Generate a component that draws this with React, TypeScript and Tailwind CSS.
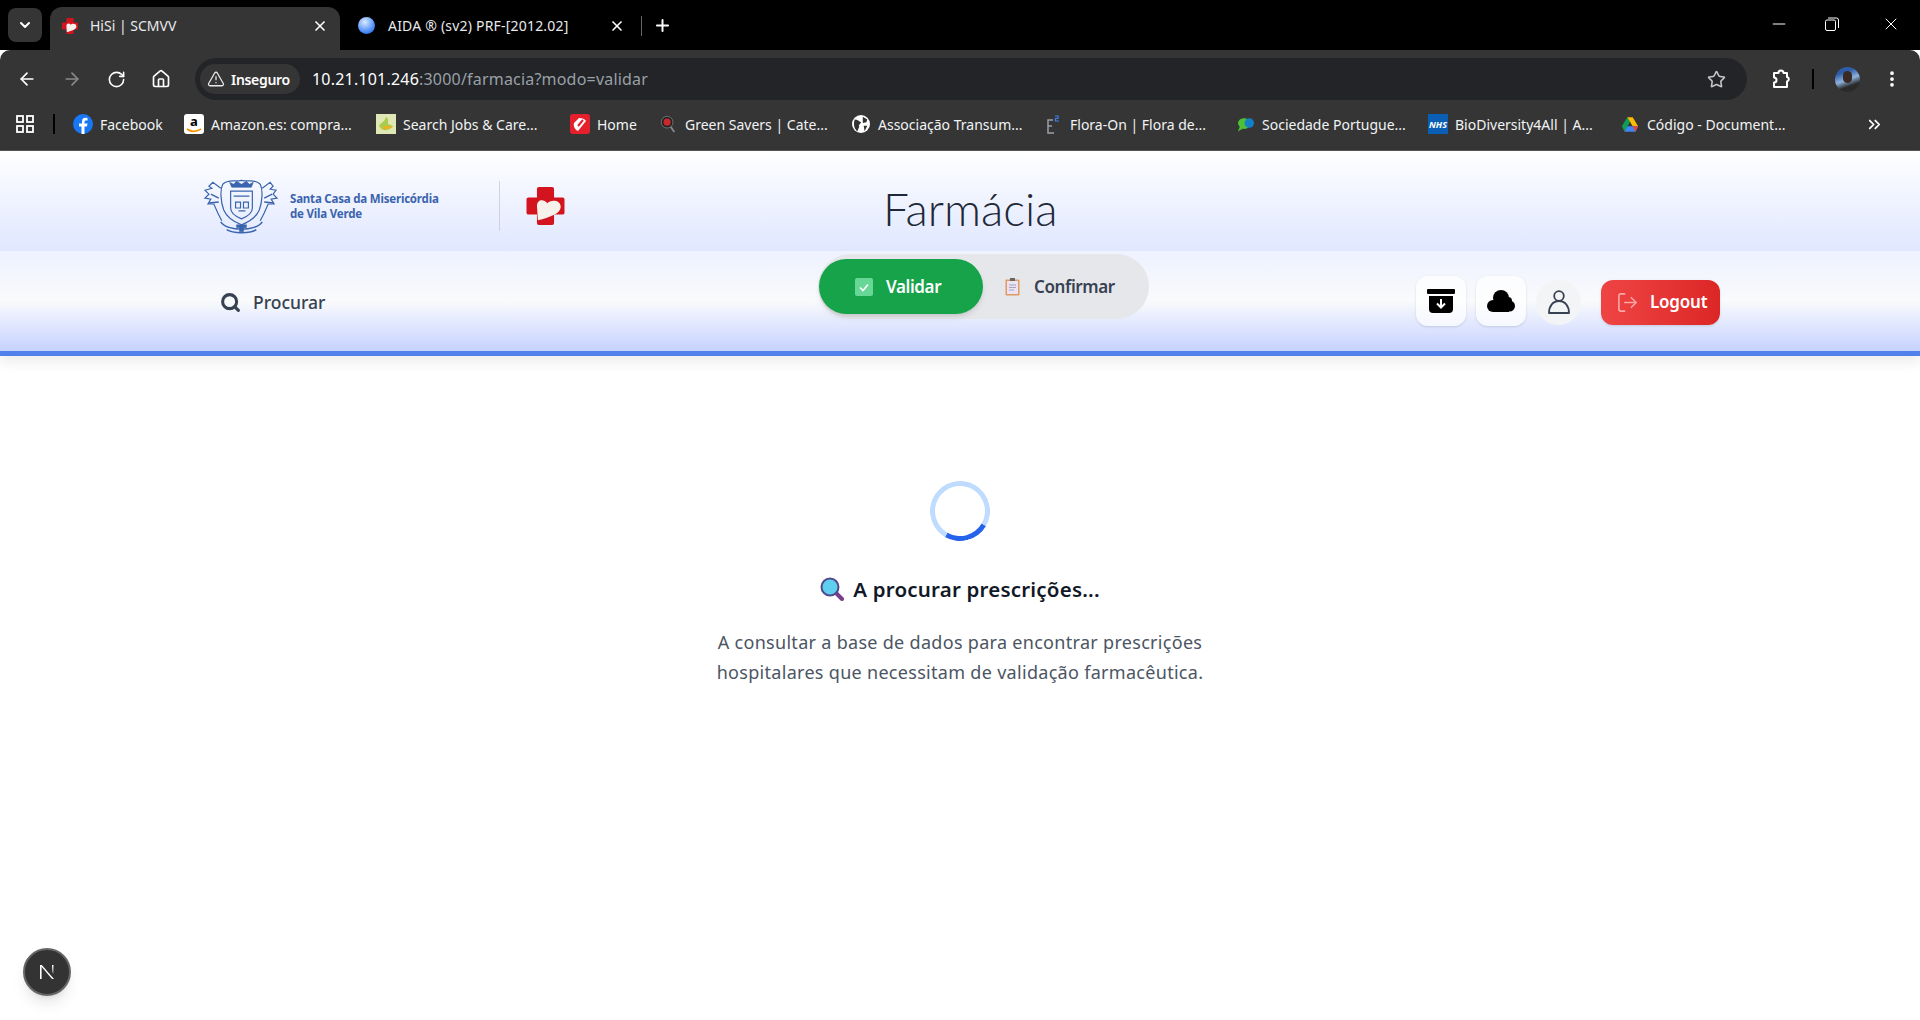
import React from 'react';
import { ArrowLeft, ArrowRight, RotateCw, Home, Star, MoreVertical, X, Plus, ChevronDown, ChevronsRight, TriangleAlert, Search, LogOut, Minus } from 'lucide-react';

function CrossFavicon({ className }: { className: string }) {
  return (
    <svg viewBox="0 0 40 40" className={className}>
      <path d="M11 2a2 2 0 0 1 2-2h14a2 2 0 0 1 2 2v9h9a2 2 0 0 1 2 2v14a2 2 0 0 1-2 2h-9v9a2 2 0 0 1-2 2H13a2 2 0 0 1-2-2v-9H2a2 2 0 0 1-2-2V13a2 2 0 0 1 2-2h9z" fill="#d3141f" />
      <path d="M12 35L11 20C11 13 18 12 22 17C25 13 36 13 36 21C36 28 24 32 12 35z" fill="#f6f1ea" />
    </svg>
  );
}

function Crest() {
  return (
    <svg viewBox="0 0 78 60" className="w-[77px] h-[60px] shrink-0" fill="none" stroke="#3a64ad">
      <path d="M20 8c6-6 12-2 19-4 7 2 13-2 19 4 3 6 2 18-1 26-3 7-10 12-18 15-8-3-15-8-18-15-3-8-4-20-1-26z" strokeWidth="1.2" />
      <path d="M28 15h22v17c0 6-6 9-11 11-5-2-11-5-11-11z" strokeWidth="1.2" />
      <path d="M29 11h20l2-5-4 2-3-3-5 3-5-3-3 3-4-2z" fill="#3a64ad" strokeWidth="0.6" />
      <path d="M31 20h16M33 26h5v6h-5zM41 26h5v6h-5zM36 35h7" strokeWidth="1.2" />
      <path d="M18 12l-8-6-4 4 3 2-7 2 4 4-4 4 6 1-3 5 6 0 4 9 4 8M60 12l8-6 3 4-3 3 6 1-3 4 4 4-6 1 3 5-6 0-4 9-4 8" strokeWidth="1.2" />
      <path d="M8 18l8 4M6 27l10-1M70 18l-8 4M72 27l-10-1M18 46c6 10 36 10 42 0M24 54c6 4 24 4 30 0" strokeWidth="1.5" />
      <path d="M34 49h10v3h-3v4h-4v-4h-3z" fill="#3a64ad" strokeWidth="0.5" />
    </svg>
  );
}

const bookmarks = [
  { label: 'Facebook', box: 'w-[111px]', icon: <svg viewBox="0 0 20 20" className="w-5 h-5"><circle cx="10" cy="10" r="10" fill="#1877f2" /><path d="M11.500 20v-7.500h2.500l.5-3h-3V8c0-1 .5-1.500 1.500-1.500h1.500V4c-3-.5-5.500 0-5.500 3.500v2H6v3h2.500V20z" fill="#fff" /></svg> },
  { label: 'Amazon.es: compra...', box: 'w-[192px]', icon: <span className="w-5 h-5 rounded-[3px] bg-white flex flex-col items-center justify-start text-black font-bold text-[13px] leading-[14px]">a<svg viewBox="0 0 16 5" className="w-4 h-[5px]" fill="none" stroke="#f79400" strokeWidth="1.6"><path d="M1 1c4 3 9 3 14 0" /></svg></span> },
  { label: 'Search Jobs & Care...', box: 'w-[194px]', icon: <svg viewBox="0 0 20 20" className="w-5 h-5"><rect width="20" height="20" fill="#dfe8b4" /><path d="M3 12c2-4 5-3 7-9 3 1 2 6 2 7l5 2c-3 5-11 6-14 0z" fill="#a9cc4f" /><path d="M8 12h9l-4 3H6z" fill="#e9b422" /></svg> },
  { label: 'Home', box: 'w-[88px]', icon: <svg viewBox="0 0 20 20" className="w-5 h-5"><rect width="20" height="20" rx="3" fill="#e3202c" /><path d="M4 9l5-5c3 0 6 1 7 3L8 17c-3-1-5-5-4-8z" fill="#fff" /><path d="M8 12l5-6" stroke="#e3202c" strokeWidth="2" /></svg> },
  { label: 'Green Savers | Cate...', box: 'w-[193px]', icon: <svg viewBox="0 0 20 20" className="w-[18px] h-5"><circle cx="9" cy="8" r="6.500" fill="#222" stroke="#777" /><circle cx="9" cy="8" r="4" fill="#c9282c" /><path d="M13 13l4 6" stroke="#888" strokeWidth="2" /></svg> },
  { label: 'Associação Transum...', box: 'w-[192px]', icon: <svg viewBox="0 0 20 20" className="w-[18px] h-[18px]"><circle cx="10" cy="10" r="10" fill="#fff" /><path d="M3 5c3 0 5 2 7 3-1 3-3 2-2 5l-2 5c-3-2-5-7-3-13zM12 2l5 3-1 3-4 1zM13 12l4 0-3 6z" fill="#333" /></svg> },
  { label: 'Flora-On | Flora de...', box: 'w-[192px]', icon: <svg viewBox="0 0 14 20" className="w-[14px] h-5"><path d="M7 6H2v13h6M2 12h4" stroke="#9aa0a6" strokeWidth="1.5" fill="none" /><path d="M9 2h3v2.500H9.500V7H13" stroke="#3b82f6" strokeWidth="1.2" fill="none" /></svg> },
  { label: 'Sociedade Portugue...', box: 'w-[193px]', icon: <svg viewBox="0 0 20 20" className="w-[19px] h-5"><path d="M2 9a7 6 0 0 1 13-2 7 6 0 0 1-8 8l-5 3 2-5a6 6 0 0 1-2-4z" fill="#4fbf35" /><circle cx="14" cy="9" r="5" fill="#137fc4" /></svg> },
  { label: 'BioDiversity4All | A...', box: 'w-[192px]', icon: <span className="w-5 h-5 bg-[#0a5fb4] flex items-center justify-center text-white italic font-bold text-[9px] leading-none">NHS</span> },
  { label: 'Código - Document...', box: 'w-[190px]', icon: <svg viewBox="0 0 20 18" className="w-[18px] h-[17px]"><path d="M7 1l3 5-6 11-3-6z" fill="#0f9d58" /><path d="M7 1h6l6 10h-6z" fill="#fbbc04" /><path d="M7 11h12l-3 6H4z" fill="#4285f4" /><path d="M16 17l3-6h-6z" fill="#ea4335" /></svg> },
];

function BrowserChrome() {
  return (
    <div className="font-['Noto_Sans',sans-serif] text-[#e8eaed]">
      {/* tab strip */}
      <div className="h-[50px] bg-black flex items-end relative">
        <div className="w-[34px] h-[34px] ml-2 mb-2 bg-[#353535] rounded-lg flex items-center justify-center shrink-0">
          <ChevronDown size={16} strokeWidth={3} color="#fff" />
        </div>
        <div className="w-[290px] h-[43px] ml-2 bg-[#353535] rounded-t-xl flex items-center pl-3 pb-[6px] shrink-0">
          <CrossFavicon className="w-4 h-4 shrink-0" />
          <span className="ml-3 text-[14px]">HiSi | SCMVV</span>
          <X size={16} strokeWidth={2.5} color="#fff" className="ml-auto mr-3" />
        </div>
        <div className="h-[43px] flex items-center pl-[18px] pb-[6px] shrink-0 w-[350px]">
          <span className="w-[17px] h-[17px] rounded-full bg-[radial-gradient(circle_at_40%_30%,#dbeafe,#3b82f6_70%)] shrink-0" />
          <span className="ml-[13px] text-[14px] tracking-[0.2px] w-[221px] shrink-0 whitespace-nowrap">AIDA ® (sv2) PRF-[2012.02]</span>
          <X size={16} strokeWidth={2.5} color="#fff" className="shrink-0" />
          <span className="w-px h-5 bg-[#666] ml-[16px] shrink-0" />
          <Plus size={19} strokeWidth={2.5} color="#fff" className="ml-[11px] shrink-0" />
        </div>
        <div className="ml-auto flex items-center h-[50px] pb-1 shrink-0">
          <Minus size={20} strokeWidth={1.2} color="#fff" className="mr-[36px] mt-px" />
          <svg viewBox="0 0 14 14" className="w-[14px] h-[14px] mr-[42px] mt-px" fill="none" stroke="#fff"><rect x="0.5" y="3" width="10" height="10.5" rx="1.5" /><path d="M3 1h8.500a2 2 0 0 1 2 2v8" /></svg>
          <X size={20} strokeWidth={1.2} color="#fff" className="mr-[19px] mt-px" />
        </div>
      </div>

      {/* toolbar */}
      <div className="h-[50px] bg-[#353535] rounded-t-[10px] flex items-end">
        <div className="w-[195px] h-[50px] pl-[17px] flex items-center gap-[25px] pt-[8px] shrink-0">
          <ArrowLeft size={20} color="#fff" strokeWidth={2} />
          <ArrowRight size={20} color="#8a8a8a" strokeWidth={2} />
          <RotateCw size={19} color="#fff" strokeWidth={2} />
          <Home size={20} color="#fff" strokeWidth={2} />
        </div>
        <div className="h-[42px] w-[1552px] bg-[#222428] rounded-[21px] flex items-center pl-[5px] pr-[21px] shrink-0">
          <div className="h-[30px] w-[100px] rounded-[15px] bg-[#353535] flex items-center pl-[7px] shrink-0">
            <TriangleAlert size={18} color="#e8eaed" strokeWidth={1.7} />
            <span className="ml-[6px] text-[14px] font-semibold tracking-[-0.3px] text-white">Inseguro</span>
          </div>
          <span className="ml-3 text-[16px] tracking-[0.2px] text-white">10.21.101.246<span className="text-[#9aa0a6]">:3000/farmacia?modo=validar</span></span>
          <Star size={19} color="#c4c7c5" strokeWidth={2} className="ml-auto" />
        </div>
        <div className="flex-1 h-[50px] flex items-center pt-[8px] pl-[24px]">
          <svg viewBox="0 0 20 20" className="w-5 h-5" fill="none" stroke="#fff" strokeWidth="2" strokeLinejoin="round"><path d="M3 4h4.500a2.500 2.500 0 0 1 5 0H16v4a2.300 2.300 0 0 1 0 4.500V18H3v-4.500a2.500 2.500 0 0 0 0-5z" /></svg>
          <span className="w-[2px] h-5 bg-black ml-[21px]" />
          <span className="w-[25px] h-[25px] rounded-full bg-[linear-gradient(160deg,#2f5da8_25%,#8fb3dd_50%,#2a2a2a_72%)] ml-[21px] overflow-hidden flex justify-center">
            <span className="w-[9px] h-[12px] rounded-full bg-[#3a2a24] mt-1" />
          </span>
          <MoreVertical size={20} color="#fff" strokeWidth={2.5} className="ml-[22px]" />
        </div>
      </div>

      {/* bookmarks bar */}
      <div className="h-[51px] bg-[#353535] flex items-center border-b border-[#555] pb-[2px]">
        <div className="w-[73px] flex items-center shrink-0 pl-4">
          <svg viewBox="0 0 18 18" className="w-[18px] h-[18px]" fill="none" stroke="#fff" strokeWidth="1.8"><rect x="1" y="1" width="6" height="6" /><rect x="11" y="1" width="6" height="6" /><rect x="1" y="11" width="6" height="6" /><rect x="11" y="11" width="6" height="6" /></svg>
          <span className="w-[2px] h-5 bg-black ml-[19px]" />
        </div>
        {bookmarks.map((b) => (
          <div key={b.label} className={`${b.box} flex items-center shrink-0`}>
            <span className="w-5 flex justify-center shrink-0">{b.icon}</span>
            <span className="ml-[7px] text-[14px] whitespace-nowrap text-[#f1f3f4]">{b.label}</span>
          </div>
        ))}
        <ChevronsRight size={19} color="#fff" strokeWidth={2.2} className="ml-[55px]" />
      </div>
    </div>
  );
}

function Header() {
  return (
    <header className="shadow-[0_6px_12px_rgba(0,0,0,0.08)] relative">
      <div className="h-[100px] bg-gradient-to-b from-white to-indigo-100 flex items-center pl-[203px] pt-[10px]">
        <Crest />
        <div className="ml-[10px] w-[209px] text-[11.5px] leading-[15px] font-bold text-[#3a64ad] tracking-[-0.2px] shrink-0">
          Santa Casa da Misericórdia<br />de Vila Verde
        </div>
        <span className="w-px h-[50px] bg-[#cfd3dc] shrink-0" />
        <CrossFavicon className="w-[39px] h-[38px] ml-[26px] shrink-0" />
        <h1 className="ml-[318px] mt-[5px] font-['Lato',sans-serif] text-[46px] leading-none font-light text-[#1f2937]">Farmácia</h1>
      </div>
      <div className="h-[105px] bg-gradient-to-b from-indigo-50 via-gray-50 to-indigo-200 border-b-[5px] border-[#5080ea] flex pl-[220px]">
        <div className="w-[598px] h-[100px] flex items-center shrink-0 pt-[2px]">
          <Search size={21} strokeWidth={3.5} color="#374151" />
          <span className="ml-[12px] text-[17.5px] font-medium text-[#374151]">Procurar</span>
        </div>
        <div className="w-[331px] h-[65px] mt-[3px] rounded-full bg-[#e5e7eb] flex items-center pl-px shrink-0">
          <div className="w-[164px] h-[55px] rounded-full bg-[#16a34a] shadow-md flex items-center pl-9 shrink-0">
            <span className="w-[18px] h-[18px] bg-[#66d795] rounded-[2px] flex items-center justify-center">
              <svg viewBox="0 0 12 12" className="w-3 h-3" fill="none" stroke="#fff" strokeWidth="1.6"><path d="M2 6.500l3 3 5-6" /></svg>
            </span>
            <span className="ml-[13px] text-[17px] tracking-[-0.4px] font-semibold text-white">Validar</span>
          </div>
          <svg viewBox="0 0 15 18" className="w-[15px] h-[18px] ml-[22px]"><rect x="0.5" y="1.5" width="14" height="16" rx="1" fill="#e29a5f" /><rect x="2" y="3" width="11" height="13" fill="#e9e3f3" /><path d="M4 7h7M4 9.500h7M4 12h5" stroke="#a9a1bd" /><rect x="5" y="0" width="5" height="3" fill="#666" /></svg>
          <span className="ml-[14px] text-[17px] tracking-[-0.4px] font-semibold text-[#374151]">Confirmar</span>
        </div>
        <div className="h-[100px] flex items-center ml-[267px]">
          <div className="w-[50px] h-[50px] rounded-xl bg-white/70 shadow-sm flex items-center justify-center">
            <svg viewBox="0 0 28 24" className="w-[28px] h-[24px]"><rect x="0" y="0" width="28" height="5" rx="1" /><path d="M2 7h24v13a4 4 0 0 1-4 4H6a4 4 0 0 1-4-4z" /><path d="M14 10v8M10 14.500l4 4 4-4" stroke="#fff" strokeWidth="2" fill="none" /></svg>
          </div>
          <div className="w-[50px] h-[50px] rounded-xl bg-white/70 shadow-sm flex items-center justify-center ml-[10px]">
            <svg viewBox="0 0 28 22" className="w-[28px] h-[22px]"><circle cx="6" cy="16" r="6" /><circle cx="14" cy="8" r="8" /><circle cx="22.5" cy="16" r="5.500" /><circle cx="21" cy="11" r="4" /><rect x="6" y="12" width="16" height="10" /></svg>
          </div>
          <div className="w-[45px] h-[45px] rounded-full bg-[#f3f4f6] flex items-center justify-center ml-[10px] mt-[2px]">
            <svg viewBox="0 0 22 24" className="w-[22px] h-[24px]" fill="none" stroke="#374151" strokeWidth="1.8"><circle cx="11" cy="6" r="4.800" /><path d="M1 23c0-7 4-12 10-12s10 5 10 12z" strokeLinejoin="round" /></svg>
          </div>
          <button className="w-[119px] h-[45px] ml-5 mt-[2px] rounded-xl bg-gradient-to-r from-[#ef4444] to-[#dc2626] flex items-center pl-[15px] text-white text-[17px] tracking-[-0.2px] font-semibold shadow-sm">
            <LogOut size={23} strokeWidth={1.7} color="#fca5a5" />
            <span className="ml-[11px]">Logout</span>
          </button>
        </div>
      </div>
    </header>
  );
}

export default function App() {
  return (
    <div className="w-[1920px] h-[1020px] bg-white overflow-hidden relative font-['Noto_Sans',sans-serif]">
      <BrowserChrome />
      <Header />

      <main className="flex flex-col items-center pt-[125px]">
        <div className="w-[60px] h-[60px] rounded-full border-[5px] border-[#bfdbfe] border-b-[#2563eb] rotate-[-15deg]" />
        <div className="mt-[32px] flex items-center text-[20.5px] tracking-[0.2px] leading-[32px] font-semibold text-[#111827]">
          <svg viewBox="0 0 24 24" className="w-[24px] h-[24px] mr-[9px]">
            <path d="M15 15l7 7" stroke="#7a3d8c" strokeWidth="4" strokeLinecap="round" />
            <circle cx="10" cy="10" r="8.500" fill="#5ecfee" stroke="#4f4a8c" strokeWidth="2" />
          </svg>
          A procurar prescrições...
        </div>
        <p className="mt-[22px] w-[560px] text-center text-[18px] tracking-[0.3px] leading-[30px] text-[#4b5563]">
          A consultar a base de dados para encontrar prescrições<br />hospitalares que necessitam de validação farmacêutica.
        </p>
      </main>

      {/* dev indicator */}
      <div className="absolute left-[23px] bottom-[24px] w-[48px] h-[48px] rounded-full bg-[#333] border-2 border-[#666] shadow-lg flex items-center justify-center">
        <svg viewBox="0 0 16 16" className="w-4 h-4">
          <defs>
            <linearGradient id="nextFade" x1="0" y1="0" x2="0" y2="1">
              <stop offset="0" stopColor="#fff" />
              <stop offset="1" stopColor="#fff" stopOpacity="0.3" />
            </linearGradient>
          </defs>
          <path d="M1 1h1.600v14H1z" fill="#fff" />
          <path d="M13 1h1.500v9L13 8z" fill="url(#nextFade)" />
          <path d="M1 1h1.800L15 15h-2z" fill="#fff" />
        </svg>
      </div>
    </div>
  );
}
